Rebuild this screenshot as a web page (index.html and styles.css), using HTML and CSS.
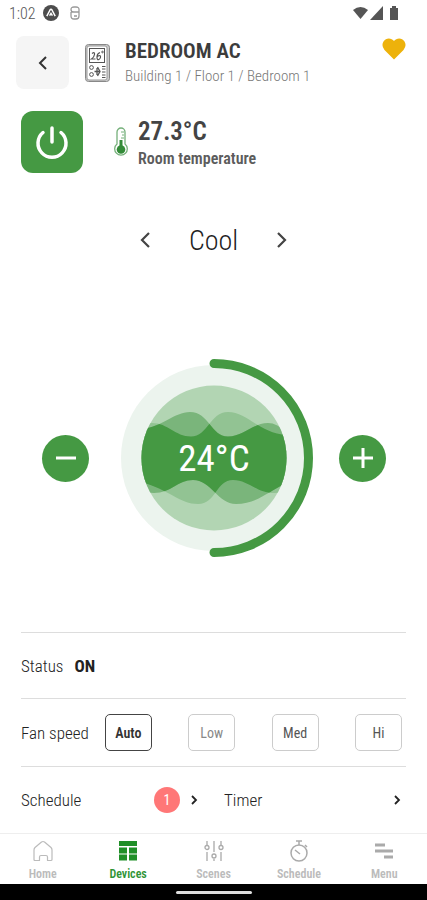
FILE: index.html
```html
<!DOCTYPE html>
<html lang="en">
<head>
<meta charset="utf-8">
<meta name="viewport" content="width=device-width, initial-scale=1">
<title>Bedroom AC</title>
<link rel="stylesheet" href="styles.css">
</head>
<body>
<div class="screen">
  <div class="statusbar">
    <span class="clock">1:02</span>
    <svg width="16" height="16" viewBox="0 0 16 16"><circle cx="8" cy="8" r="8" fill="#4d4d4d"/><path d="M3.8 11.2 7 5q1-1.6 2 0l3.2 6.2M6.6 10.6 8 8.4l1.4 2.2" fill="none" stroke="#fff" stroke-width="1.5"/></svg>
    <svg class="debug" width="10" height="14" viewBox="0 0 10 14" fill="none" stroke="#999" stroke-width="1.3"><path d="M9 3.500Q9 1 6 1H4Q1 1 1 3.500T4 6h5v4q0 3-3 3H4q-3 0-3-3V8M1 6h5M4 10h3M9 3v3M1 6v3"/></svg>
    <svg class="signals" width="46" height="15" viewBox="0 0 46 15" fill="#555"><path d="M0 4Q7.500-2 15 4L7.500 13z"/><path d="M30 0v14H17z"/><path d="M37 2h2V0h4v2h2v12h-8z"/></svg>
  </div>

  <header class="header">
    <button class="back" aria-label="Back"><svg width="10" height="14" viewBox="0 0 10 14"><path d="M8 1 2 7l6 6" fill="none" stroke="#333" stroke-width="2"/></svg></button>
    <svg class="device" width="25" height="38" viewBox="0 0 25 38" fill="none" stroke="#555" stroke-width="1">
      <rect x=".5" y=".5" width="24" height="37" rx="3" fill="#ccc" stroke="#888"/>
      <rect x="2" y="2" width="20" height="34" rx="2" fill="#fff" stroke="#999"/>
      <rect x="4.500" y="4.500" width="15" height="14" fill="#fff"/>
      <path d="M7 9.500q3-2 2.500 1T6.500 15h4M15 8.500q-3 1-3 4.500t2 2.500 1.500-3-3 0" stroke-width="1.200"/><circle cx="17.500" cy="8" r=".8"/>
      <circle cx="6.500" cy="23.500" r="1.900"/><circle cx="6.500" cy="30.500" r="1.900"/><path d="M17 22.500h3.500M17 25h3.500M17 28h3.500M17 31h3.500M17 33.500h3.500"/>
      <path d="M9.500 27.500h6M12.500 23l2.500 4.500-2.500 4.500M12 24v7" stroke-width="1.300"/>
    </svg>
    <div class="heading">
      <h1>BEDROOM AC</h1>
      <p>Building 1 / Floor 1 / Bedroom 1</p>
    </div>
    <button class="favorite" aria-label="Favorite"><svg width="24" height="22" viewBox="0 0 24 22"><path d="M12 21.500 2.500 12Q-1 7.500 1.500 3.500C4-.5 9.500-.2 12 3c2.500-3.200 8-3.500 10.500.5Q25 7.500 21.500 12z" fill="#edb20b"/></svg></button>
  </header>

  <section class="summary">
    <button class="power" aria-label="Power"><svg width="34" height="34" viewBox="0 0 34 34" fill="none" stroke="#fff" stroke-width="3.500" stroke-linecap="round"><path d="M17 3v14M8 7.500a14 14 0 1 0 18 0"/></svg></button>
    <svg class="thermo" width="14" height="30" viewBox="0 0 14 30"><path d="M3 17V5a4 4 0 0 1 8 0v12a6.300 6.300 0 1 1-8 0z" fill="#fff" stroke="#75b07a" stroke-width="1.300"/><circle cx="7" cy="22.500" r="4.300" fill="#338b38"/><path d="M7 13v8" stroke="#338b38" stroke-width="3"/><path d="M7 5h3M8 8h2M7 11h3" stroke="#75b07a"/></svg>
    <div class="room">
      <div class="temp">27.3°C</div>
      <div class="caption">Room temperature</div>
    </div>
  </section>

  <section class="mode">
    <button aria-label="Previous mode"><svg width="12" height="16" viewBox="0 0 12 16"><path d="M10 1 3 8l7 7" fill="none" stroke="#444" stroke-width="2.200"/></svg></button>
    <span>Cool</span>
    <button aria-label="Next mode"><svg width="12" height="16" viewBox="0 0 12 16"><path d="m2 1 7 7-7 7" fill="none" stroke="#444" stroke-width="2.200"/></svg></button>
  </section>

  <section class="control">
    <button class="step" aria-label="Decrease"><svg width="20" height="20" viewBox="0 0 20 20"><path d="M0 10h20" stroke="#fff" stroke-width="3"/></svg></button>
    <div class="dial">
      <svg viewBox="0 0 200 200">
        <defs>
          <clipPath id="disc"><circle cx="100" cy="100" r="72.500"/></clipPath>
          <path id="wave-a" d="M27 71C49 69 60 54 76 54C95 54 97 78.500 114 78.500C130 78.500 139 65 154 65Q164 65 175 77V124C156 132 144 146 122 146C104 146 97 122 79 122C64 122 57 135 40 135L27 134z"/>
          <path id="wave-b" d="M175 77C145 76 134 54 114 54C96 54 94 78.500 77 78.500C61 78.500 54 65 38 65L27 66V124C56 132 66 146 84 146C102 146 102 122 119 122C134 122 143 135 160 135L175 134z"/>
          <clipPath id="overlap"><use href="#wave-b"/></clipPath>
        </defs>
        <circle cx="100" cy="100" r="93" fill="#ecf4ee"/>
        <g clip-path="url(#disc)">
          <rect x="27" y="27" width="146" height="146" fill="#b2d5b3"/>
          <use href="#wave-b" fill="#92c393"/>
          <use href="#wave-a" fill="#7ab57b"/>
          <use href="#wave-a" fill="#459943" clip-path="url(#overlap)"/>
        </g>
        <path d="M100 5.500a94.500 94.500 0 0 1 0 189" fill="none" stroke="#459943" stroke-width="9" stroke-linecap="round"/>
      </svg>
      <span class="reading">24°C</span>
    </div>
    <button class="step" aria-label="Increase"><svg width="20" height="20" viewBox="0 0 20 20"><path d="M0 10h20M10 0v20" stroke="#fff" stroke-width="3"/></svg></button>
  </section>

  <section class="settings">
    <div class="row status"><span>Status</span><b>ON</b></div>
    <div class="row fan">
      <span>Fan speed</span>
      <div class="speeds">
        <button class="speed active">Auto</button>
        <button class="speed low">Low</button>
        <button class="speed">Med</button>
        <button class="speed">Hi</button>
      </div>
    </div>
    <div class="row links">
      <a href="#schedule"><span>Schedule</span><span class="badge">1</span><svg width="8" height="10" viewBox="0 0 8 10"><path d="m2 1 4 4-4 4" fill="none" stroke="#222" stroke-width="1.800"/></svg></a>
      <a href="#timer"><span>Timer</span><svg class="end" width="8" height="10" viewBox="0 0 8 10"><path d="m2 1 4 4-4 4" fill="none" stroke="#222" stroke-width="1.800"/></svg></a>
    </div>
  </section>

  <nav class="tabs">
    <a href="#home"><svg width="22" height="22" viewBox="0 0 22 22" fill="none" stroke="#bbb" stroke-width="1.200" stroke-linejoin="round"><path d="M3 20.500q-1 0-1-1V10q0-1.500 1-2.500L9.500 2q1.500-1 3 0L19 7.500q1 1 1 2.500v9.500q0 1-1 1h-3.500V17q0-1.500-1.500-1.500H9Q7.500 15.500 7.500 17v3.500z"/></svg>Home</a>
    <a href="#devices" class="current"><svg width="22" height="22" viewBox="0 0 22 22" fill="#1f8f27"><path d="M2 1h18v5H2zM2 7.500h8v6H2zM12 7.500h8v6h-8zM2 14.500h8v6H2zM12 14.500h8v6h-8z"/></svg>Devices</a>
    <a href="#scenes"><svg width="22" height="22" viewBox="0 0 22 22" fill="none" stroke="#aaa" stroke-width="1.300"><path d="M4 1v4M4 12v9M11 1v11M11 19v2M18 1v4M18 12v9"/><circle cx="4" cy="7.500" r="2"/><circle cx="11" cy="16" r="2"/><circle cx="18" cy="7.500" r="2"/></svg>Scenes</a>
    <a href="#schedule"><svg width="22" height="22" viewBox="0 0 22 22" fill="none" stroke="#aaa" stroke-width="1.500"><circle cx="11" cy="13" r="8"/><path d="M8 1h6M11 1v4M7 10l5 4M17 5l2 2"/></svg>Schedule</a>
    <a href="#menu"><svg width="22" height="22" viewBox="0 0 22 22" stroke="#aaa" stroke-width="3"><path d="M2 5h10M2 11h18M11 17h9"/></svg>Menu</a>
  </nav>
  <div class="gesture"><i></i></div>
</div>
</body>
</html>
```
FILE: styles.css
```css
* { box-sizing: border-box; }
body { margin: 0; background: #fff; color: #444; font-family: "Roboto Condensed", "Liberation Sans Narrow", Roboto, sans-serif; }
button { border: 0; padding: 0; background: none; color: inherit; font: inherit; display: grid; place-items: center; }
a { color: inherit; text-decoration: none; }
h1, p { margin: 0; }
svg { display: block; flex: none; }
.screen { min-height: 100vh; display: flex; flex-direction: column; }
.statusbar { display: flex; align-items: center; height: 26px; padding: 0 28px 0 9px; gap: 7px; }
.clock { font-size: 16px; font-weight: 300; color: #555; }
.debug { margin-left: 4px; }
.signals { margin-left: auto; }
.header { display: flex; align-items: center; padding: 10px 21px 0 16px; }
.back { width: 53px; height: 53px; border-radius: 8px; background: #f5f5f5; }
.device { margin: 0 15px 0 16px; }
.heading { flex: 1; }
h1 { font-size: 21px; line-height: 26px; font-weight: 600; color: #3c3c3c; }
.heading p { font-size: 15px; line-height: 24px; font-weight: 300; color: #777; }
.favorite { align-self: flex-start; margin-top: 2px; }
.summary { display: flex; align-items: center; padding: 22px 21px 0; }
.power { width: 62px; height: 62px; border-radius: 12px; background: #459943; }
.thermo { margin: 0 10px 0 31px; }
.room { padding-top: 5px; }
.temp { font-size: 25px; line-height: 28px; font-weight: 600; }
.caption { font-size: 16px; line-height: 26px; font-weight: 600; color: #5c5c5c; }
.mode { display: flex; align-items: center; justify-content: center; gap: 38px; height: 36px; margin-top: 49px; font-size: 28px; font-weight: 300; color: #222; }
.control { flex: 1; display: flex; align-items: center; justify-content: space-between; padding: 26px 41px 0 42px; }
.step { width: 47px; height: 47px; border-radius: 50%; background: #459943; }
.dial { display: grid; place-items: center; width: 200px; }
.dial svg, .reading { grid-area: 1 / 1; }
.dial svg { width: 100%; }
.reading { font-size: 37px; color: #fff; }
.settings { padding: 0 21px; font-size: 17px; }
.row { display: flex; align-items: center; height: 67px; border-top: 1px solid #ddd; font-weight: 300; color: #222; }
.row.status { height: 66px; gap: 11px; }
.row.fan { height: 68px; }
.status b { font-weight: 700; }
.speeds { flex: 1; display: flex; justify-content: space-between; padding: 0 4px 0 16px; }
.speed { width: 47px; height: 37px; border: 1px solid #ccc; border-radius: 5px; font-size: 14px; font-weight: 400; color: #555; }
.speed.active { border-color: #444; font-weight: 600; color: #333; }
.speed.low { color: #888; }
.links a { flex: 1; display: flex; align-items: center; }
.links a + a { padding: 0 5px 0 26px; }
.badge { display: grid; place-items: center; width: 26px; height: 26px; margin: 0 10px 0 auto; border-radius: 50%; background: #ff7777; color: #fff; font-size: 14px; font-weight: 400; }
.end { margin-left: auto; }
.tabs { display: flex; height: 51px; border-top: 1px solid #eee; padding-top: 6px; }
.tabs a { flex: 1; display: flex; flex-direction: column; align-items: center; gap: 4px; font-size: 12px; line-height: 16px; font-weight: 600; color: #bbb; }
.tabs .current { color: #2f9436; }
.gesture { display: grid; place-items: center; height: 16px; background: #000; }
.gesture i { width: 76px; height: 3px; border-radius: 2px; background: #ddd; }
```
